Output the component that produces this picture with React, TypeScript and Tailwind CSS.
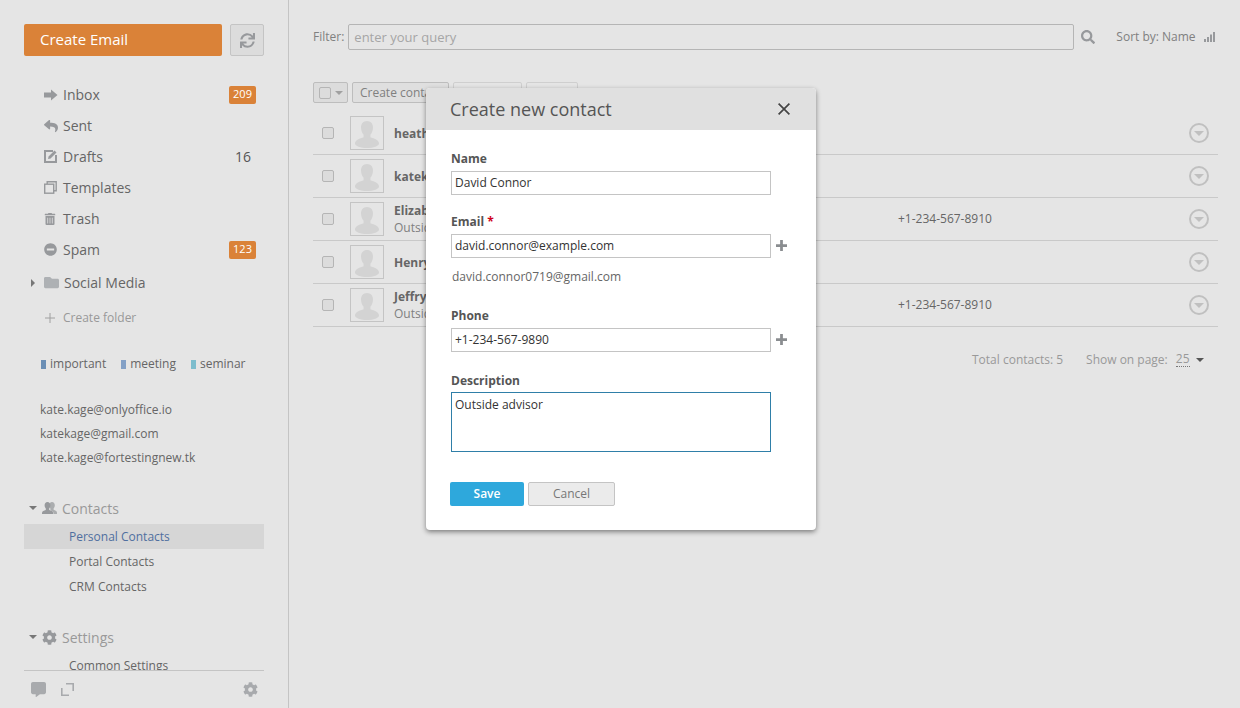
import React from "react";
import { FaCog, FaCommentAlt, FaFolder, FaMinusCircle, FaReply, FaSearch, FaSync, FaTrashAlt } from "react-icons/fa";

const font = { fontFamily: '"Open Sans", "Liberation Sans", sans-serif' };

function ArrowIcon() {
  return <svg width="14" height="12" viewBox="0 0 14 12" fill="#97999c"><path d="M0 3.500h7V0.500L13.500 6 7 11.500v-3H0z" /></svg>;
}
function DraftIcon() {
  return (
    <svg width="13" height="13" viewBox="0 0 13 13" fill="none">
      <path d="M9 1H1v11h11V5" stroke="#97999c" strokeWidth="2" />
      <path d="M4 9l.6-2.600L10.500.5l2 2L6.600 8.400z" fill="#97999c" />
    </svg>
  );
}
function TemplateIcon() {
  return (
    <svg width="13" height="13" viewBox="0 0 13 13" fill="none" stroke="#97999c" strokeWidth="1.4">
      <rect x="0.7" y="3.200" width="9" height="9" />
      <path d="M3.200 3V.8h9v9H10" />
    </svg>
  );
}
function PeopleIcon() {
  return (
    <svg width="15" height="14" viewBox="0 0 15 14" fill="#97999c">
      <path d="M10 1c1.700 0 2.800 1.400 2.800 3.300 0 1.300-.5 2.500-1.200 3.200v1.300c1.300.5 3.400 1.100 3.400 2.700V13h-3.300c0-2-1.100-3-3.300-3.800V7.500C7.700 6.700 7.200 5.500 7.200 4.300 7.200 2.400 8.300 1 10 1z" opacity="0.75" />
      <path d="M5.500 1C7.300 1 8.400 2.400 8.400 4.300c0 1.300-.5 2.500-1.200 3.200v1.500c1.700.6 4 1.200 4 3V13H0v-1c0-1.800 2.100-2.400 3.800-3V7.500c-.7-.7-1.200-1.900-1.200-3.200C2.600 2.400 3.700 1 5.500 1z" />
    </svg>
  );
}
function NavRow({ icon, label, count, badge }: { icon: React.ReactNode; label: string; count?: string; badge?: string }) {
  return (
    <div className="flex h-[31px] items-center pl-5">
      <span className="flex w-[19px] justify-start">{icon}</span>
      <span className="text-[14px] text-[#666666]">{label}</span>
      <span className="ml-auto mr-2 flex">
        {badge && <span className="flex h-[18px] w-[27px] items-center justify-center rounded-[2px] bg-[#da8238] text-[11px] text-white">{badge}</span>}
        {count && <span className="mr-[5px] text-[14px] text-[#555555]">{count}</span>}
      </span>
    </div>
  );
}
function Tag({ color, label }: { color: string; label: string }) {
  return (
    <span className="mr-[15px] flex items-center gap-[4px] text-[12px] text-[#666666]">
      <span className={`h-[9px] w-[5px] ${color}`} />
      {label}
    </span>
  );
}
function Caret({ color = "#777777", size = "sm" }: { color?: string; size?: "sm" | "lg" }) {
  return (
    <span
      className={size === "lg" ? "block h-0 w-0 border-x-[5px] border-t-[5px] border-x-transparent" : "block h-0 w-0 border-x-[4px] border-t-[4px] border-x-transparent"}
      style={{ borderTopColor: color }}
    />
  );
}
function Avatar() {
  return (
    <div className="flex h-[34px] w-[34px] shrink-0 items-end justify-center border border-[#c4c4c4]">
      <svg width="26" height="29" viewBox="0 0 26 29" fill="#d3d3d3">
        <path d="M13 1c3.700 0 6 2.800 6 6.500 0 3-1.300 5.700-2.600 7.300v2.400c3.600 1.200 8.600 2.600 8.600 6.300 0 2.600-5.600 4.500-12 4.500S1 26.100 1 23.500c0-3.700 5-5.100 8.600-6.300v-2.400C8.300 13.200 7 10.500 7 7.500 7 3.800 9.300 1 13 1z" />
      </svg>
    </div>
  );
}
function Check() {
  return <span className="block h-[12px] w-[12px] rounded-[2px] border border-[#b5b5b5] bg-[#dcdcdc]" />;
}
function Row({ name, sub, phone }: { name: string; sub?: string; phone?: string }) {
  return (
    <div className="flex h-[43px] items-center border-b border-[#c9c9c9]">
      <span className="mb-[1px] ml-[9px] mr-[16px]"><Check /></span>
      <Avatar />
      <div className="ml-[10px] w-[504px] text-[12px] leading-[17px]">
        <div className="font-bold text-[#666666]">{name}</div>
        {sub && <div className="text-[#808080]">{sub}</div>}
      </div>
      <span className="text-[12px] text-[#666666]">{phone}</span>
      <span className="ml-auto mr-[9px] flex h-[20px] w-[20px] items-center justify-center rounded-full border-[2px] border-[#c0c0c0]">
        <Caret color="#c0c0c0" size="lg" />
      </span>
    </div>
  );
}
function Label({ children }: { children: React.ReactNode }) {
  return <div className="mb-[4px] h-[17px] text-[12px] font-bold leading-[17px] text-[#555555]">{children}</div>;
}
function Field({ value, plus }: { value: string; plus?: boolean }) {
  return (
    <div className="flex items-center">
      <div className="flex h-[24px] w-[320px] items-center border border-[#c4c4c4] bg-white pl-[3px] text-[12px] text-[#333333]">{value}</div>
      {plus && (
        <svg className="mb-[2px] ml-[5px]" width="11" height="11" viewBox="0 0 12 12" fill="#8a8d90"><path d="M4.500 0h3v4.500H12v3H7.500V12h-3V7.500H0v-3h4.500z" /></svg>
      )}
    </div>
  );
}

export default function App() {
  return (
    <div className="relative flex h-[708px] w-[1240px] overflow-hidden bg-[#e5e5e5]" style={font}>
      {/* Sidebar */}
      <aside className="flex h-full w-[289px] shrink-0 flex-col border-r border-[#c4c4c4] pl-6 pr-6">
        <div className="min-h-0 flex-1 overflow-hidden pt-6">
          <div className="flex gap-2">
            <div className="flex h-[32px] w-[198px] items-center rounded-[2px] bg-[#da8238] pb-[2px] pl-4 text-[15px] text-white">Create Email</div>
            <div className="flex h-[32px] w-[34px] items-center justify-center rounded-[2px] border border-[#c4c4c4] bg-[#dcdcdc]">
              <FaSync size={15} color="#97999c" />
            </div>
          </div>
          <div className="mt-[23px]">
            <NavRow icon={<ArrowIcon />} label="Inbox" badge="209" />
            <NavRow icon={<FaReply size={14} color="#97999c" />} label="Sent" />
            <NavRow icon={<DraftIcon />} label="Drafts" count="16" />
            <NavRow icon={<TemplateIcon />} label="Templates" />
            <NavRow icon={<FaTrashAlt size={12} color="#97999c" />} label="Trash" />
            <NavRow icon={<FaMinusCircle size={13} color="#97999c" />} label="Spam" badge="123" />
          </div>
          <div className="mt-[1px] flex h-[33px] items-center pl-[7px]">
            <span className="mr-[9px] h-0 w-0 border-y-[4px] border-l-[4px] border-y-transparent border-l-[#777777]" />
            <FaFolder size={15} color="#aeb1b4" />
            <span className="ml-[5px] text-[14px] text-[#666666]">Social Media</span>
          </div>
          <div className="mt-[3px] flex h-[32px] items-center pl-[21px] text-[12px] text-[#999999]">
            <svg className="mr-[8px]" width="10" height="10" viewBox="0 0 10 10" stroke="#a0a0a0" strokeWidth="1"><path d="M5 0v10M0 5h10" /></svg>
            Create folder
          </div>
          <div className="mt-[22px] flex h-[16px] items-center pl-[17px]">
            <Tag color="bg-[#6a8eb5]" label="important" />
            <Tag color="bg-[#83a0c6]" label="meeting" />
            <Tag color="bg-[#7dbdcd]" label="seminar" />
          </div>
          <div className="mt-[26px] pl-4 text-[12px] leading-[24px] text-[#666666]">
            <div>kate.kage@onlyoffice.io</div>
            <div>katekage@gmail.com</div>
            <div>kate.kage@fortestingnew.tk</div>
          </div>
          <div className="mt-[26px] flex h-[24px] items-center pl-[5px] text-[14px] text-[#999999]">
            <span className="mr-[5px]"><Caret /></span>
            <PeopleIcon />
            <span className="ml-[5px]">Contacts</span>
          </div>
          <div className="mt-[4px] text-[12px] text-[#666666]">
            <div className="flex h-[25px] items-center bg-[#d6d6d6] pl-[45px] text-[#4f6f9f]">Personal Contacts</div>
            <div className="flex h-[25px] items-center pl-[45px]">Portal Contacts</div>
            <div className="flex h-[25px] items-center pl-[45px]">CRM Contacts</div>
          </div>
          <div className="mt-[26px] flex h-[24px] items-center pl-[5px] text-[14px] text-[#999999]">
            <span className="mr-[5px]"><Caret /></span>
            <FaCog size={15} color="#97999c" />
            <span className="ml-[5px]">Settings</span>
          </div>
          <div className="mt-[4px] pl-[45px] text-[12px] leading-[25px] text-[#666666]">Common Settings</div>
        </div>
        <div className="flex h-[38px] shrink-0 items-center border-t border-[#c4c4c4] pl-[7px] pr-[6px]">
          <FaCommentAlt size={15} color="#a8aaad" />
          <svg className="ml-[15px]" width="13" height="13" viewBox="0 0 13 13" fill="none" stroke="#a8aaad" strokeWidth="1.600"><path d="M5 .8h7.200V8M.8 5v7.200H8" /></svg>
          <FaCog className="ml-auto" size={15} color="#a8aaad" />
        </div>
      </aside>

      {/* Main */}
      <main className="min-w-0 flex-1 pl-6 pr-[22px] pt-6">
        <div className="flex h-[26px] items-center text-[12px] text-[#808080]">
          <span>Filter:</span>
          <div className="ml-[4px] flex h-[26px] w-[726px] items-center rounded-[2px] border border-[#b5b5b5] pl-[5px] pt-[1px] text-[13px] text-[#a6a6a6]">enter your query</div>
          <FaSearch className="ml-[7px]" size={14} color="#97999c" />
          <span className="ml-[21px] text-[#808080]">Sort by: Name</span>
          <svg className="ml-[8px]" width="11" height="10" viewBox="0 0 11 10" fill="#97999c"><rect y="7" width="2" height="3" /><rect x="3" y="5" width="2" height="5" /><rect x="6" y="2.500" width="2" height="7.500" /><rect x="9" width="2" height="10" /></svg>
        </div>
        <div className="mt-[32px] flex h-[21px] text-[12px] text-[#808080]">
          <div className="flex w-[35px] items-center justify-center gap-[4px] rounded-[2px] border border-[#bdbdbd] bg-[#dcdcdc]">
            <Check />
            <Caret color="#a0a0a0" />
          </div>
          <div className="ml-[4px] flex w-[97px] items-center rounded-[2px] border border-[#bdbdbd] bg-[#dfdfdf] pl-[7px]">Create contact</div>
          <div className="ml-[4px] w-[69px] rounded-[2px] border border-[#cfcfcf]" />
          <div className="ml-[4px] w-[52px] rounded-[2px] border border-[#cfcfcf]" />
        </div>
        <div className="mt-[9px]">
          <Row name="heather" />
          <Row name="katekage" />
          <Row name="Elizabeth" sub="Outside advisor" phone="+1-234-567-8910" />
          <Row name="Henry" />
          <Row name="Jeffry" sub="Outside advisor" phone="+1-234-567-8910" />
        </div>
        <div className="mt-[24px] flex h-[17px] items-center text-[12px] text-[#999999]">
          <span className="ml-[659px]">Total contacts: 5</span>
          <span className="ml-[23px]">Show on page:</span>
          <span className="ml-[8px] border-b border-dotted border-[#777777] leading-[14px] text-[#999999]">25</span>
          <span className="ml-[6px]"><Caret color="#555555" /></span>
        </div>
      </main>

      {/* Modal */}
      <div className="absolute left-[426px] top-[88px] w-[390px] overflow-hidden rounded-[4px] bg-white shadow-[0_2px_5px_rgba(0,0,0,0.45)]">
        <div className="flex h-[42px] items-center bg-[#e0e0e0] pl-6 pr-[26px]">
          <span className="text-[18px] text-[#555555]">Create new contact</span>
          <svg className="ml-auto" width="12" height="12" viewBox="0 0 12 12" stroke="#444444" strokeWidth="1.700"><path d="M.6.6l10.800 10.800M11.400.6L.6 11.400" /></svg>
        </div>
        <div className="pl-[25px] pt-[20px]">
          <Label>Name</Label>
          <Field value="David Connor" />
          <div className="mt-[18px]">
            <Label>Email <span className="text-[#d0021b]">*</span></Label>
            <Field value="david.connor@example.com" plus />
          </div>
          <div className="mt-[10px] h-[17px] pl-px text-[12px] leading-[17px] text-[#666666]">david.connor0719@gmail.com</div>
          <div className="mt-[22px]">
            <Label>Phone</Label>
            <Field value="+1-234-567-9890" plus />
          </div>
          <div className="mt-[20px]">
            <Label>Description</Label>
            <div className="-mt-[1px] h-[60px] w-[320px] border border-[#2f7fa8] pl-[3px] pt-[3px] text-[12px] leading-[18px] text-[#333333]">Outside advisor</div>
          </div>
          <div className="-ml-px mt-[30px] flex gap-[4px] pb-[24px]">
            <div className="flex h-[24px] w-[74px] items-center justify-center rounded-[2px] bg-[#2ea8dc] text-[12px] font-semibold text-white">Save</div>
            <div className="flex h-[24px] w-[87px] items-center justify-center rounded-[2px] border border-[#c4c4c4] bg-[#ebebeb] text-[12px] text-[#777777]">Cancel</div>
          </div>
        </div>
      </div>
    </div>
  );
}
